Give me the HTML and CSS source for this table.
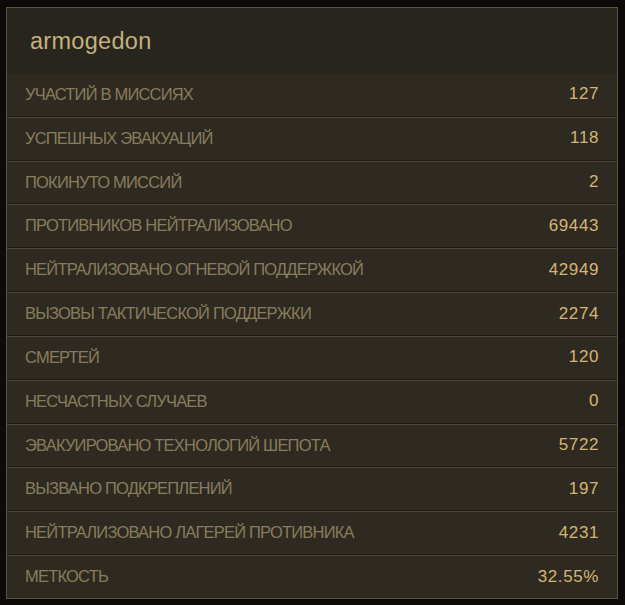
FILE: index.html
```html
<!DOCTYPE html>
<html lang="ru">
<head>
<meta charset="utf-8">
<title>armogedon</title>
<link rel="stylesheet" href="styles.css">
</head>
<body>
<div class="panel">
  <div class="header"><h1 class="title">armogedon</h1></div>
  <div class="rows">
    <div class="row"><span class="label">УЧАСТИЙ В МИССИЯХ</span><span class="value">127</span></div>
    <div class="row"><span class="label">УСПЕШНЫХ ЭВАКУАЦИЙ</span><span class="value">118</span></div>
    <div class="row"><span class="label">ПОКИНУТО МИССИЙ</span><span class="value">2</span></div>
    <div class="row"><span class="label">ПРОТИВНИКОВ НЕЙТРАЛИЗОВАНО</span><span class="value">69443</span></div>
    <div class="row"><span class="label">НЕЙТРАЛИЗОВАНО ОГНЕВОЙ ПОДДЕРЖКОЙ</span><span class="value">42949</span></div>
    <div class="row"><span class="label">ВЫЗОВЫ ТАКТИЧЕСКОЙ ПОДДЕРЖКИ</span><span class="value">2274</span></div>
    <div class="row"><span class="label">СМЕРТЕЙ</span><span class="value">120</span></div>
    <div class="row"><span class="label">НЕСЧАСТНЫХ СЛУЧАЕВ</span><span class="value">0</span></div>
    <div class="row"><span class="label">ЭВАКУИРОВАНО ТЕХНОЛОГИЙ ШЕПОТА</span><span class="value">5722</span></div>
    <div class="row"><span class="label">ВЫЗВАНО ПОДКРЕПЛЕНИЙ</span><span class="value">197</span></div>
    <div class="row"><span class="label">НЕЙТРАЛИЗОВАНО ЛАГЕРЕЙ ПРОТИВНИКА</span><span class="value">4231</span></div>
    <div class="row"><span class="label">МЕТКОСТЬ</span><span class="value">32.55%</span></div>
  </div>
</div>
</body>
</html>
```
FILE: styles.css
```css
html, body {
  margin: 0;
  padding: 0;
  background: #0c0b09;
  height: 100%;
}
body {
  padding: 7px 0 0 6px;
  box-sizing: border-box;
  font-family: "Liberation Sans", Arial, sans-serif;
}
.panel {
  width: 612px;
  height: 592px;
  box-sizing: border-box;
  border: 1px solid #5a543f;
  background: #2e2a21;
  display: flex;
  flex-direction: column;
}
.header {
  height: 65px;
  flex: none;
  background: #28241e;
  display: flex;
  align-items: center;
  padding-left: 23px;
}
.title {
  margin: 0;
  font-size: 23.5px;
  font-weight: normal;
  color: #c4b07c;
  letter-spacing: 0.3px;
  padding-top: 2px;
}
.rows {
  flex: 1;
  display: flex;
  flex-direction: column;
}
.row {
  flex: 1;
  display: flex;
  align-items: center;
  justify-content: space-between;
  padding: 0 18px 0 18px;
  background: #2e2a21;
}
.row + .row {
  border-top: 1px solid #1d1a15;
  box-shadow: inset 0 1px 0 #4c4634;
}
.label {
  font-size: 16.5px;
  color: #887d5b;
  letter-spacing: -0.8px;
}
.value {
  font-size: 17px;
  color: #d6b572;
  letter-spacing: 0.6px;
}
```
